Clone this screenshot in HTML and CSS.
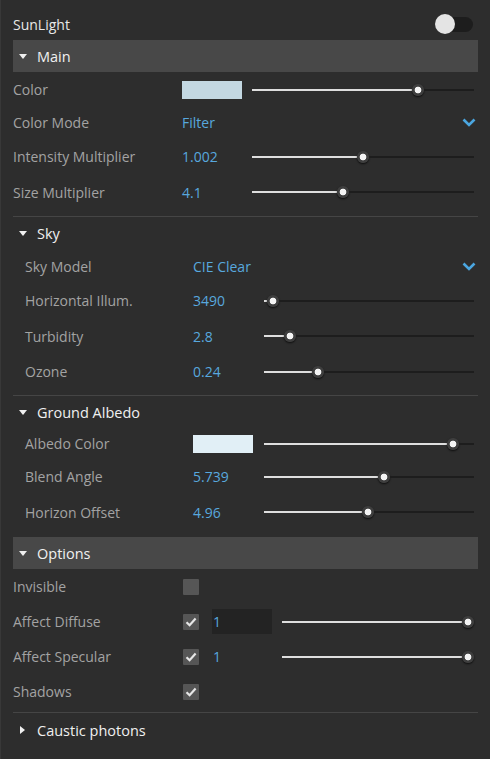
FILE: index.html
```html
<!DOCTYPE html>
<html>
<head>
<meta charset="utf-8">
<link rel="stylesheet" href="styles.css">
</head>
<body>
<div class="panel">
  <div class="title-row">
    <span class="title">SunLight</span>
    <span class="toggle"><span class="knob"></span></span>
  </div>

  <div class="bar"><span class="tri-down"></span><span>Main</span></div>
  <div class="rows main-rows">
    <div class="row h33">
      <span class="label">Color</span>
      <span class="swatch sw-main"></span>
      <div class="slider"><span class="fill" style="width:160px"></span><span class="thumb"></span><span class="rest"></span></div>
    </div>
    <div class="row h33">
      <span class="label">Color Mode</span>
      <div class="dd"><span class="value">Filter</span><svg class="chev" width="14" height="9" viewBox="0 0 14 9"><path d="M1.5 1.5 L7 7 L12.5 1.5" fill="none" stroke="#4ba6e0" stroke-width="2.6"/></svg></div>
    </div>
    <div class="row h35">
      <span class="label">Intensity Multiplier</span>
      <span class="value">1.002</span>
      <div class="slider"><span class="fill" style="width:105px"></span><span class="thumb"></span><span class="rest"></span></div>
    </div>
    <div class="row h35">
      <span class="label">Size Multiplier</span>
      <span class="value">4.1</span>
      <div class="slider"><span class="fill" style="width:85px"></span><span class="thumb"></span><span class="rest"></span></div>
    </div>
  </div>

  <div class="sep sep-a"></div>
  <div class="group-head h33"><span class="tri-down"></span><span>Sky</span></div>
  <div class="rows indented">
    <div class="row h33">
      <span class="label">Sky Model</span>
      <div class="dd"><span class="value">CIE Clear</span><svg class="chev" width="14" height="9" viewBox="0 0 14 9"><path d="M1.5 1.5 L7 7 L12.5 1.5" fill="none" stroke="#4ba6e0" stroke-width="2.6"/></svg></div>
    </div>
    <div class="row h35">
      <span class="label">Horizontal Illum.</span>
      <span class="value">3490</span>
      <div class="slider"><span class="fill" style="width:3px"></span><span class="thumb"></span><span class="rest"></span></div>
    </div>
    <div class="row h35">
      <span class="label">Turbidity</span>
      <span class="value">2.8</span>
      <div class="slider"><span class="fill" style="width:20px"></span><span class="thumb"></span><span class="rest"></span></div>
    </div>
    <div class="row h35">
      <span class="label">Ozone</span>
      <span class="value">0.24</span>
      <div class="slider"><span class="fill" style="width:48px"></span><span class="thumb"></span><span class="rest"></span></div>
    </div>
  </div>

  <div class="sep sep-b"></div>
  <div class="group-head h32"><span class="tri-down"></span><span>Ground Albedo</span></div>
  <div class="rows indented">
    <div class="row h31">
      <span class="label">Albedo Color</span>
      <span class="swatch sw-albedo"></span>
      <div class="slider"><span class="fill" style="width:183px"></span><span class="thumb"></span><span class="rest"></span></div>
    </div>
    <div class="row h35">
      <span class="label">Blend Angle</span>
      <span class="value">5.739</span>
      <div class="slider"><span class="fill" style="width:114px"></span><span class="thumb"></span><span class="rest"></span></div>
    </div>
    <div class="row h35">
      <span class="label">Horizon Offset</span>
      <span class="value">4.96</span>
      <div class="slider"><span class="fill" style="width:98px"></span><span class="thumb"></span><span class="rest"></span></div>
    </div>
  </div>

  <div class="bar bar-options"><span class="tri-down"></span><span>Options</span></div>
  <div class="rows options">
    <div class="orow">
      <span class="label">Invisible</span>
      <span class="check"></span>
    </div>
    <div class="orow">
      <span class="label">Affect Diffuse</span>
      <span class="check"><svg width="16" height="16" viewBox="0 0 16 16"><path d="M3.5 8.2 L6.6 11.2 L12.6 4.6" fill="none" stroke="#e6e6e6" stroke-width="2.2"/></svg></span>
      <span class="numbox">1</span>
      <div class="slider"><span class="fill" style="width:180px"></span><span class="thumb"></span><span class="rest"></span></div>
    </div>
    <div class="orow">
      <span class="label">Affect Specular</span>
      <span class="check"><svg width="16" height="16" viewBox="0 0 16 16"><path d="M3.5 8.2 L6.6 11.2 L12.6 4.6" fill="none" stroke="#e6e6e6" stroke-width="2.2"/></svg></span>
      <span class="numplain">1</span>
      <div class="slider"><span class="fill" style="width:180px"></span><span class="thumb"></span><span class="rest"></span></div>
    </div>
    <div class="orow">
      <span class="label">Shadows</span>
      <span class="check"><svg width="16" height="16" viewBox="0 0 16 16"><path d="M3.5 8.2 L6.6 11.2 L12.6 4.6" fill="none" stroke="#e6e6e6" stroke-width="2.2"/></svg></span>
    </div>
  </div>

  <div class="sep sep-c"></div>
  <div class="group-head h34"><span class="tri-right"></span><span>Caustic photons</span></div>
</div>
</body>
</html>
```

FILE: styles.css
```css
html, body {
  margin: 0;
  padding: 0;
  background: #2d2d2d;
  height: 100%;
}
body {
  font-family: "Open Sans", "Noto Sans", sans-serif;
  font-size: 14px;
  color: #a3a3a3;
  overflow: hidden;
}
.panel {
  border-left: 1px solid #383838;
  padding: 8px 12px 0 12px;
  min-height: 100%;
  box-sizing: border-box;
}
.title-row {
  height: 32px;
  display: flex;
  align-items: center;
  justify-content: space-between;
  padding-right: 5px;
}
.title {
  color: #e8e8e8;
  font-size: 14px;
}
.toggle {
  width: 37px;
  height: 15px;
  border-radius: 8px;
  background: #1d1d1d;
  display: flex;
  align-items: center;
}
.knob {
  width: 20px;
  height: 20px;
  border-radius: 50%;
  background: #e4e4e4;
  margin-left: -1px;
}
.bar {
  height: 32px;
  background: #484848;
  display: flex;
  align-items: center;
  padding-left: 6px;
  color: #f0f0f0;
  font-size: 14.5px;
}
.bar-options {
  margin-top: 7px;
}
.group-head {
  display: flex;
  align-items: center;
  padding-left: 6px;
  color: #f0f0f0;
  font-size: 14.5px;
}
.tri-down {
  width: 0;
  height: 0;
  border-left: 4px solid transparent;
  border-right: 4px solid transparent;
  border-top: 5px solid #f0f0f0;
  margin-right: 10px;
}
.tri-right {
  width: 0;
  height: 0;
  border-top: 4px solid transparent;
  border-bottom: 4px solid transparent;
  border-left: 5px solid #f0f0f0;
  margin-left: 1px;
  margin-right: 12px;
}
.h31 { height: 31px; }
.h32 { height: 32px; }
.h33 { height: 33px; }
.h34 { height: 34px; }
.h35 { height: 35.5px; }
.main-rows {
  margin-top: 1px;
}
.row {
  display: grid;
  grid-template-columns: 169px 70px 1fr;
  align-items: center;
  padding-right: 4px;
}
.indented .row {
  padding-left: 12px;
  grid-template-columns: 168px 71px 1fr;
}
.label {
  color: #a3a3a3;
  white-space: nowrap;
}
.value {
  color: #58a8de;
}
.dd {
  grid-column: 2 / 4;
  display: flex;
  align-items: center;
  justify-content: space-between;
  margin-right: -2px;
}
.chev {
  display: block;
}
.swatch {
  width: 60px;
  height: 18px;
}
.sw-main { background: #c3d8e2; }
.sw-albedo { background: #e1eff6; }
.slider {
  display: flex;
  align-items: center;
  height: 13px;
}
.fill {
  height: 2px;
  background: #dedede;
  flex: none;
}
.rest {
  flex: 1;
  height: 2px;
  background: #1d1d1d;
}
.thumb {
  flex: none;
  width: 12px;
  height: 12px;
  border-radius: 50%;
  background: radial-gradient(circle, #f4f4f4 0 3px, #3e3e3e 3.7px);
  box-shadow: 0 1px 2px rgba(0, 0, 0, 0.75);
}
.sep {
  height: 1px;
  background: #454545;
}
.sep-a { margin-top: 6px; }
.sep-b { margin-top: 5.5px; }
.sep-c { margin-top: 3px; }
.orow {
  height: 35px;
  display: grid;
  grid-template-columns: 169px 30px 70px 1fr;
  align-items: center;
  padding-right: 4px;
}
.check {
  width: 16px;
  height: 16px;
  margin-left: 1px;
  background: #565656;
  border-radius: 1px;
  display: block;
}
.check svg {
  display: block;
}
.numbox {
  width: 59px;
  height: 25px;
  background: #232323;
  color: #58a8de;
  display: flex;
  align-items: center;
  padding-left: 1px;
  font-size: 14px;
}
.numplain {
  color: #58a8de;
  padding-left: 1px;
  font-size: 14px;
}
```
